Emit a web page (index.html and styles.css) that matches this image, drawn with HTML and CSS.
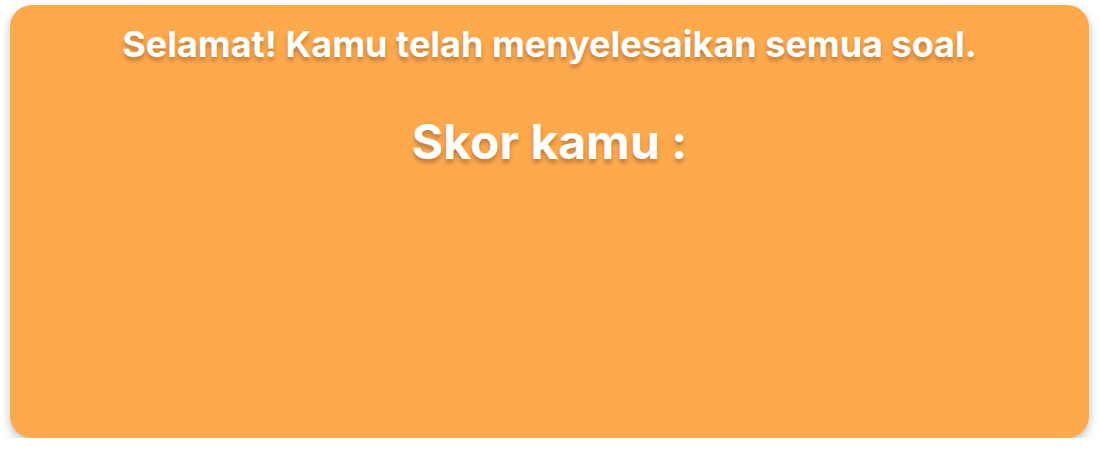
FILE: index.html
```html
<!DOCTYPE html>
<html lang="id">
<head>
<meta charset="utf-8">
<link rel="stylesheet" href="styles.css">
</head>
<body>
<main class="card">
  <h1 class="title">Selamat! Kamu telah menyelesaikan semua soal.</h1>
  <h2 class="score">Skor kamu :</h2>
</main>
</body>
</html>
```
FILE: styles.css
```css
html, body {
  margin: 0;
  padding: 0;
  background: #ffffff;
}
body {
  padding: 5px 10px 0 10px;
  font-family: Inter, "Noto Sans", sans-serif;
}
.card {
  box-sizing: border-box;
  width: 1079px;
  height: 433px;
  background: #FFA94D;
  border-radius: 22px;
  box-shadow: 0 4px 10px rgba(0, 0, 0, 0.25);
  display: flex;
  flex-direction: column;
  align-items: center;
  padding-top: 17px;
  color: #ffffff;
}
.title {
  margin: 0;
  font-size: 36px;
  font-weight: 700;
  line-height: 44px;
  text-shadow: 0 4px 4px rgba(0, 0, 0, 0.25);
}
.score {
  margin: 47px 0 0 0;
  font-size: 48px;
  font-weight: 700;
  line-height: 58px;
  text-shadow: 0 4px 4px rgba(0, 0, 0, 0.25);
}
```
